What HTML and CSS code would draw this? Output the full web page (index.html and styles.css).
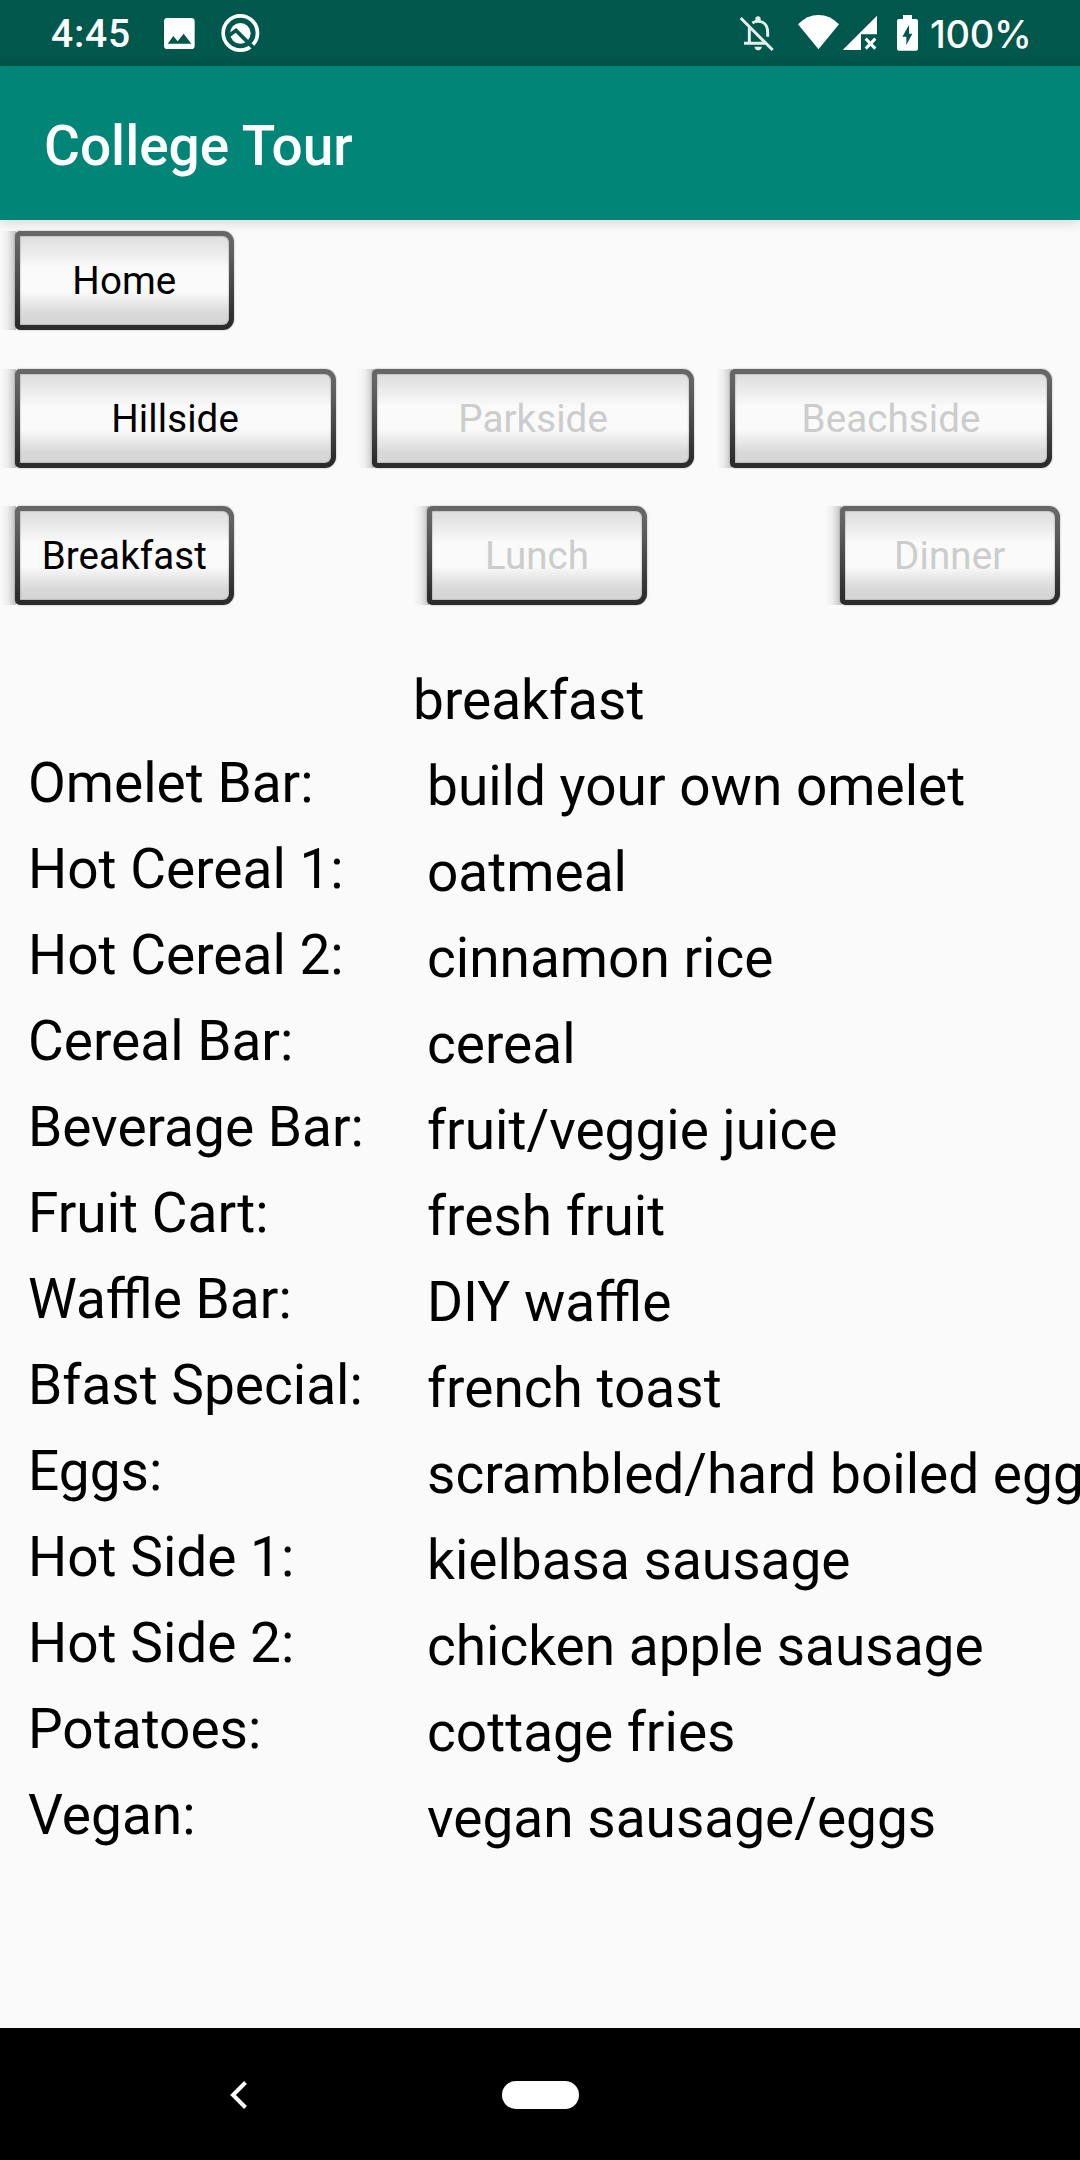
FILE: index.html
```html
<!DOCTYPE html>
<html lang="en">
<head>
<meta charset="utf-8">
<title>College Tour</title>
<link rel="stylesheet" href="styles.css">
</head>
<body>
<div class="screen">
  <header class="status">
    <div class="status-left">
      <span class="clock">4:45</span>
      <svg class="icon-image" viewBox="480 0 117 198"><path fill-rule="evenodd" d="M502 54H574Q584 54 584 64V137Q584 147 574 147H502Q492 147 492 137V64Q492 54 502 54ZM503 131.500H574L551 101L533 124L520 108Z"/></svg>
      <svg class="icon-q" viewBox="660 0 123 198"><circle cx="721" cy="99" r="51.500" class="ring"/><circle cx="721" cy="100" r="31"/><path class="cut" d="M684 109L708 91L768 151"/></svg>
    </div>
    <div class="status-right">
      <svg class="icon-bell" viewBox="48 0 126 198"><g class="soft-stroke"><path d="M88 80V130M72 129.500H136M97 69Q105 64 114 64C133 64 143 78 143 97V110"/><path d="M62 54L158 150"/></g><circle cx="114" cy="57" r="8"/><path d="M103 140H126Q123 151 114.500 151Q106 151 103 140Z"/></svg>
      <svg class="icon-wifi" viewBox="228 0 135 198"><path d="M234 73Q261 45 295.500 45Q330 45 357 73L295.500 148Z"/></svg>
      <svg class="icon-signal" viewBox="363 0 114 198"><path d="M368 150L471 47V103H423V150Z"/><path class="cross" d="M437 116L466 146M466 116L437 146"/></svg>
      <svg class="icon-battery" viewBox="525 0 75 198"><path fill-rule="evenodd" d="M549 45H576V57H588Q594 57 594 63V146Q594 152 588 152H537Q531 152 531 146V63Q531 57 537 57H549ZM567 75L547 110H559V135L577 101H567Z"/></svg>
      <span class="percent">100%</span>
    </div>
  </header>
  <div class="appbar"><h1>College Tour</h1></div>
  <main>
    <nav class="row row-home"><button class="btn narrow"><span>Home</span></button></nav>
    <nav class="row row-halls">
      <button class="btn wide"><span>Hillside</span></button>
      <button class="btn wide off"><span>Parkside</span></button>
      <button class="btn wide off"><span>Beachside</span></button>
    </nav>
    <nav class="row row-meals">
      <button class="btn narrow"><span>Breakfast</span></button>
      <button class="btn narrow off"><span>Lunch</span></button>
      <button class="btn narrow off"><span>Dinner</span></button>
    </nav>
    <section class="menu">
      <ul class="labels">
        <li>Omelet Bar:</li><li>Hot Cereal 1:</li><li>Hot Cereal 2:</li><li>Cereal Bar:</li><li>Beverage Bar:</li><li>Fruit Cart:</li><li>Waffle Bar:</li><li>Bfast Special:</li><li>Eggs:</li><li>Hot Side 1:</li><li>Hot Side 2:</li><li>Potatoes:</li><li>Vegan:</li>
      </ul>
      <div class="dishes">
        <h2>breakfast</h2>
        <ul>
          <li>build your own omelet</li><li>oatmeal</li><li>cinnamon rice</li><li>cereal</li><li>fruit/veggie juice</li><li>fresh fruit</li><li>DIY waffle</li><li>french toast</li><li>scrambled/hard boiled eggs</li><li>kielbasa sausage</li><li>chicken apple sausage</li><li>cottage fries</li><li>vegan sausage/eggs</li>
        </ul>
      </div>
    </section>
  </main>
  <footer class="navbar">
    <svg class="back" viewBox="0 0 18 30"><path d="M15.500 2.500L3 15L15.500 27.500"/></svg>
    <span class="pill"></span>
  </footer>
</div>
</body>
</html>
```
FILE: styles.css
```css
* { box-sizing: border-box; margin: 0; padding: 0; }
body { background: #fafafa; font-family: Roboto, sans-serif; color: #000; }
ul { list-style: none; }
.screen { width: 1080px; height: 2160px; display: flex; flex-direction: column; overflow: hidden; }

.status { height: 66px; flex: none; background: #00574b; color: #fff; display: flex; justify-content: space-between; font: 500 38px/68px Inter, Roboto, sans-serif; }
.status-left, .status-right { display: flex; }
.status-left { padding-left: 51px; }
.status-right { padding-right: 50px; }
.status svg { height: 66px; fill: #fff; flex: none; }
.clock { width: 109px; font-family: Roboto, sans-serif; font-size: 39px; line-height: 69px; letter-spacing: .8px; white-space: nowrap; }
.percent { width: 100px; margin-left: 10px; letter-spacing: -.3px; white-space: nowrap; }
.icon-image { width: 39px; }
.icon-q { width: 41px; margin-left: 21px; }
.icon-q .ring { fill: none; stroke: #fff; stroke-width: 11; }
.icon-q .cut { fill: none; stroke: #00574b; stroke-width: 11; }
.icon-bell { width: 42px; margin-right: 18px; opacity: .9; }
.soft-stroke { fill: none; stroke: #fff; stroke-width: 9; }
.icon-wifi { width: 45px; }
.icon-signal { width: 38px; margin-right: 16px; }
.icon-signal .cross { stroke: #fff; stroke-width: 9; }
.icon-battery { width: 25px; }

.appbar { height: 154px; flex: none; background: #008577; color: #fff; display: flex; align-items: center; padding: 6px 0 0 44px; box-shadow: 0 2px 12px rgba(0, 0, 0, .16); }
.appbar h1 { font-size: 55px; font-weight: 500; line-height: 64px; }

main { flex: 1; min-height: 0; padding-top: 11px; display: flex; flex-direction: column; }
.row { display: flex; flex: none; height: 99px; }
.row-halls { margin-top: 39px; gap: 22.3px; }
.row-meals { margin-top: 38px; gap: 178.5px; }
.btn { height: 99px; padding-left: 14.5px; border: 0; font: 38.5px/89px Roboto, sans-serif; letter-spacing: .1px; color: #000; background: linear-gradient(to right, rgba(0, 0, 0, 0), rgba(0, 0, 0, .05) 45%, rgba(0, 0, 0, .22)) no-repeat 0 0 / 16px 100%; flex: none; }
.narrow { width: 234.2px; }
.wide { width: 335.7px; }
.btn span { display: block; height: 99px; border: 5px solid transparent; border-radius: 5px 11px 11px 5px; text-align: center;
  background: linear-gradient(#e0e0e0 4%, #e8e8e8 15%, #fafafa 36%, #fafafa 62%, #d8d8d8 88%, #d5d5d5) padding-box, linear-gradient(#666 8%, #5d5d5d 25%, #2c2c2c 92%) border-box;
  box-shadow: 0 0 2px rgba(0, 0, 0, .35), inset 0 0 1.5px rgba(0, 0, 0, .6); }
.off { color: #ccc; }

.menu { display: flex; font-size: 55px; line-height: 86px; white-space: nowrap; }
.labels { width: 413px; padding: 135px 0 0 28px; flex: none; }
.dishes { padding-top: 52px; }
.dishes h2 { font-size: 55px; font-weight: 400; }
.dishes ul { padding-left: 14px; }
li { height: 86px; }

.navbar { height: 132px; flex: none; background: #000; display: flex; align-items: center; padding: 1px 0 0 230px; }
.back { width: 18px; height: 30px; fill: none; stroke: #fff; stroke-width: 4; }
.pill { width: 77px; height: 28px; margin-left: 254px; border-radius: 14px; background: #fff; }
```
